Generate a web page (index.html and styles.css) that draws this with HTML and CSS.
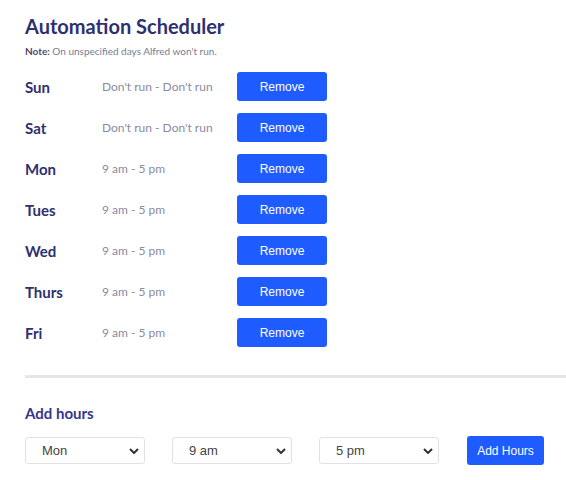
FILE: index.html
```html
<!DOCTYPE html>
<html lang="en">

<head>
    <meta charset="UTF-8">
    <meta name="viewport" content="width=device-width, initial-scale=1.0">
    <title>Automation Scheduler</title>
    <link rel="stylesheet" href="styles.css">
</head>

<body>
    <main class="scheduler">
        <h1>Automation Scheduler</h1>
        <p class="note"><b>Note:</b> On unspecified days Alfred won't run.</p>

        <div class="days">
            <div class="day">
                <span class="name">Sun</span>
                <span class="hours">Don't run - Don't run</span>
                <button class="btn remove">Remove</button>
            </div>
            <div class="day">
                <span class="name">Sat</span>
                <span class="hours">Don't run - Don't run</span>
                <button class="btn remove">Remove</button>
            </div>
            <div class="day">
                <span class="name">Mon</span>
                <span class="hours">9 am - 5 pm</span>
                <button class="btn remove">Remove</button>
            </div>
            <div class="day">
                <span class="name">Tues</span>
                <span class="hours">9 am - 5 pm</span>
                <button class="btn remove">Remove</button>
            </div>
            <div class="day">
                <span class="name">Wed</span>
                <span class="hours">9 am - 5 pm</span>
                <button class="btn remove">Remove</button>
            </div>
            <div class="day">
                <span class="name">Thurs</span>
                <span class="hours">9 am - 5 pm</span>
                <button class="btn remove">Remove</button>
            </div>
            <div class="day">
                <span class="name">Fri</span>
                <span class="hours">9 am - 5 pm</span>
                <button class="btn remove">Remove</button>
            </div>
        </div>

        <hr>

        <h2>Add hours</h2>
        <div class="add">
            <div class="pick">
                <select>
                    <option>Sun</option>
                    <option selected>Mon</option>
                    <option>Tues</option>
                    <option>Wed</option>
                    <option>Thurs</option>
                    <option>Fri</option>
                    <option>Sat</option>
                </select>
                <svg class="chev" width="10" height="6" viewBox="0 0 10 6"><path d="M1 1l4 4 4-4" fill="none" stroke="#333" stroke-width="2"/></svg>
            </div>
            <div class="pick">
                <select>
                    <option selected>9 am</option>
                    <option>10 am</option>
                </select>
                <svg class="chev" width="10" height="6" viewBox="0 0 10 6"><path d="M1 1l4 4 4-4" fill="none" stroke="#333" stroke-width="2"/></svg>
            </div>
            <div class="pick">
                <select>
                    <option selected>5 pm</option>
                    <option>6 pm</option>
                </select>
                <svg class="chev" width="10" height="6" viewBox="0 0 10 6"><path d="M1 1l4 4 4-4" fill="none" stroke="#333" stroke-width="2"/></svg>
            </div>
            <button class="btn addbtn">Add Hours</button>
        </div>
    </main>
</body>

</html>
```

FILE: styles.css
```css
* {
    box-sizing: border-box;
}

body {
    margin: 0;
    font-family: Lato, 'Open Sans', sans-serif;
    color: #2e3070;
    background: #fff;
}

.scheduler {
    padding: 12px 0 0 25px;
}

h1 {
    margin: 0;
    font-size: 20px;
    font-weight: 700;
    line-height: 28px;
    color: #2e3070;
}

.note {
    margin: 5px 0 0;
    font-size: 10px;
    color: #7b7b95;
}

.note b {
    color: #4a4a70;
}

.days {
    margin-top: 15px;
}

.day {
    display: flex;
    align-items: center;
    height: 29px;
    margin-bottom: 12px;
}

.name {
    width: 77px;
    font-size: 15px;
    font-weight: 700;
}

.hours {
    width: 135px;
    font-size: 12px;
    color: #8a8aa3;
}

.btn {
    border: none;
    border-radius: 3px;
    background: #1f5cff;
    color: #fff;
    font-family: 'Liberation Sans', Arial, sans-serif;
    font-size: 12px;
    cursor: pointer;
}

.remove {
    width: 90px;
    height: 29px;
}

hr {
    margin: 28px 0 0;
    border: none;
    border-top: 3px solid #e6e6ea;
}

h2 {
    margin: 25px 0 0;
    font-size: 15px;
    font-weight: 700;
    line-height: 20px;
    color: #35378a;
}

.add {
    display: flex;
    align-items: center;
    gap: 27px;
    margin-top: 13px;
}

.pick {
    position: relative;
    width: 120px;
}

.pick select {
    width: 100%;
    height: 27px;
    padding: 0 0 0 16px;
    border: 1px solid #e2e2e6;
    border-radius: 3px;
    background: #fff;
    appearance: none;
    font-family: 'Liberation Sans', Arial, sans-serif;
    font-size: 13px;
    color: #444;
}

.chev {
    position: absolute;
    right: 6px;
    top: 11px;
}

.addbtn {
    width: 77px;
    height: 29px;
    margin-left: 1px;
}
```
